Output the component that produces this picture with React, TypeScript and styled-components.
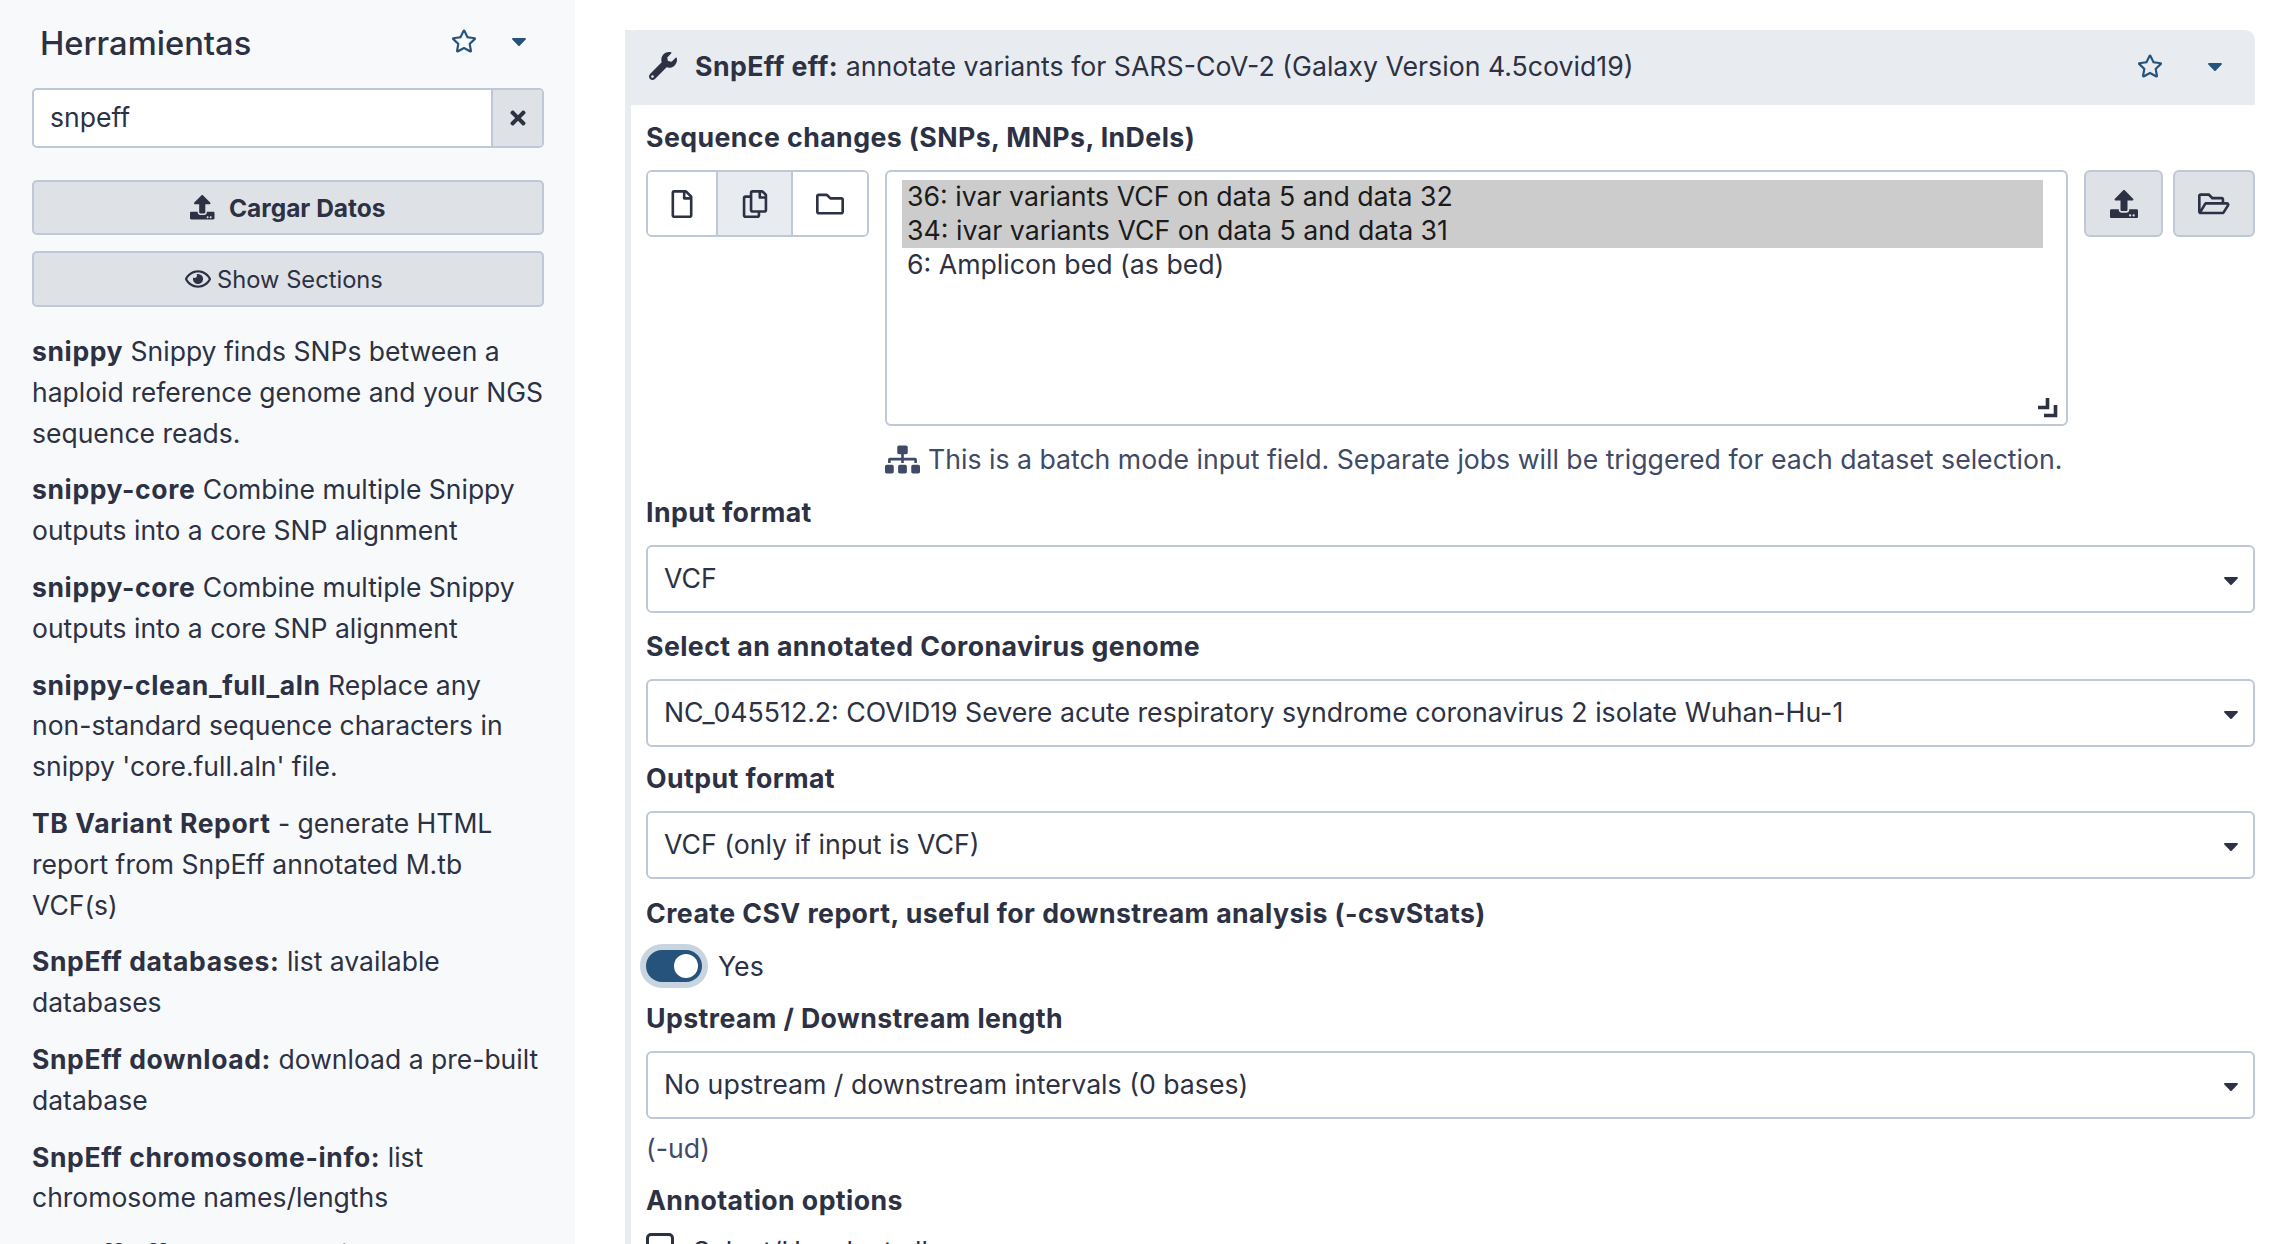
import React from 'react';
import styled, { createGlobalStyle } from 'styled-components';
import {
  FaCaretDown,
  FaRegCopy,
  FaRegEye,
  FaRegFile,
  FaRegFolder,
  FaRegFolderOpen,
  FaRegStar,
  FaSitemap,
  FaTimes,
  FaUpload,
  FaWrench,
} from 'react-icons/fa';

const GlobalStyle = createGlobalStyle`
  html, body {
    margin: 0;
    height: 100%;
    overflow: hidden;
    background: #fff;
  }

  body {
    font-family: Inter, "Noto Sans", sans-serif;
    font-size: 26.7px;
    color: #2c3143;
    -webkit-font-smoothing: antialiased;
  }

  b {
    letter-spacing: 0.42px;
  }
`;

const Page = styled.div`
  display: flex;
  height: 1244px;
  overflow: hidden;
`;

const Sidebar = styled.aside`
  width: 575px;
  flex: none;
  box-sizing: border-box;
  padding: 0 31px 0 32px;
  background: #f8f9fb;
  overflow: hidden;
`;

const SideHeader = styled.div`
  display: flex;
  align-items: center;
  height: 88px;
  padding: 0 8px;
`;

const SideTitle = styled.h2`
  flex: 1;
  margin: 0;
  padding-bottom: 2px;
  font-size: 32.7px;
  font-weight: 500;
  line-height: 86px;
`;

const IconAction = styled.span`
  display: inline-flex;
  align-items: center;
  justify-content: center;
  color: #25537b;
`;

const StarAction = styled(IconAction)`
  font-size: 26px;
`;

const CaretAction = styled(IconAction)`
  font-size: 24px;
`;

const SideActions = styled.div`
  display: flex;
  align-items: center;
  gap: 30px;
  margin-top: -6px;
  padding-right: 5px;
`;

const SearchGroup = styled.div`
  display: flex;
  height: 60px;
  box-sizing: border-box;
  border: 2px solid #bfc8d6;
  border-radius: 5px;
  background: #fff;
  overflow: hidden;
`;

const SearchValue = styled.div`
  flex: 1;
  padding: 0 16px;
  line-height: 55px;
  font-size: 26.6px;
`;

const SearchClear = styled.div`
  width: 49px;
  display: flex;
  align-items: center;
  justify-content: center;
  border-left: 2px solid #bfc8d6;
  background: #dee2e7;
  font-size: 22px;
`;

const SideButton = styled.div<{ $bold?: boolean; $height: number; $top: number }>`
  display: flex;
  align-items: center;
  justify-content: center;
  gap: ${(p) => (p.$bold ? '14px' : '6px')};
  height: ${(p) => p.$height}px;
  margin-top: ${(p) => p.$top}px;
  box-sizing: border-box;
  padding-right: ${(p) => (p.$bold ? '0' : '8px')};
  border: 2px solid #bfc8d6;
  border-radius: 5px;
  background: #dee2e7;
  font-size: ${(p) => (p.$bold ? '24.5px' : '23.7px')};
  font-weight: ${(p) => (p.$bold ? 700 : 400)};

  svg {
    font-size: ${(p) => (p.$bold ? '24.5px' : '26px')};
  }
`;

const ToolList = styled.div`
  margin-top: 24px;
`;

const ToolEntry = styled.p`
  margin: 0 0 16px;
  line-height: 40.8px;
  font-size: 26.5px;

  b {
    letter-spacing: 0.62px;
  }
`;

const NoWrap = styled.span`
  white-space: nowrap;
`;

const Main = styled.main`
  flex: 1;
  min-width: 0;
  padding: 30px 35px 0 50px;
`;

const Panel = styled.section`
  border-left: 6px solid #e8ecf0;
`;

const PanelHeader = styled.header`
  display: flex;
  align-items: center;
  height: 75px;
  box-sizing: border-box;
  margin-left: -6px;
  padding: 0 28px 3px 24px;
  background: #e8ecf0;
  border-radius: 10px 10px 0 0;
`;

const PanelTitle = styled.div`
  flex: 1;
  display: flex;
  align-items: center;
  gap: 18px;

  svg {
    font-size: 28px;
  }
`;

const PanelActions = styled.div`
  display: flex;
  align-items: center;
  gap: 40px;
`;

const PanelBody = styled.div`
  padding: 12px 0 0 15px;
`;

const FieldLabel = styled.div`
  font-weight: 700;
  letter-spacing: 0.42px;
  line-height: 40px;
`;

const DataRow = styled.div`
  display: flex;
  align-items: flex-start;
  margin-top: 13px;
`;

const SourceGroup = styled.div`
  display: flex;
  width: 223px;
  height: 67px;
  flex: none;
  box-sizing: border-box;
  border: 2px solid #bfc8d6;
  border-radius: 6px;
  overflow: hidden;
`;

const SourceOption = styled.div<{ $active?: boolean; $width: number }>`
  width: ${(p) => p.$width}px;
  display: flex;
  align-items: center;
  justify-content: center;
  background: ${(p) => (p.$active ? '#e8ecf0' : '#fff')};
  font-size: 28px;

  & + & {
    border-left: 2px solid #bfc8d6;
  }
`;

const DataList = styled.div`
  position: relative;
  width: 1183px;
  height: 256px;
  margin-left: 16px;
  flex: none;
  box-sizing: border-box;
  padding: 8px 23px 7px 15px;
  border: 2px solid #bfc8d6;
  border-radius: 6px;
`;

const DataItem = styled.div<{ $selected?: boolean }>`
  padding-left: 5px;
  height: 34px;
  line-height: 33px;
  background: ${(p) => (p.$selected ? '#cccccc' : 'transparent')};
  color: ${(p) => (p.$selected ? '#1b1b1b' : 'inherit')};
`;

const ResizeHandle = styled.svg`
  position: absolute;
  right: 8px;
  bottom: 6px;
  width: 21px;
  height: 21px;
`;

const DataButton = styled.div<{ $width: number; $gap: number; $icon: number }>`
  width: ${(p) => p.$width}px;
  height: 67px;
  margin-left: ${(p) => p.$gap}px;
  flex: none;
  display: flex;
  align-items: center;
  justify-content: center;
  box-sizing: border-box;
  border: 2px solid #bfc8d6;
  border-radius: 6px;
  background: #dee2e7;
  font-size: ${(p) => p.$icon}px;
`;

const BatchNote = styled.div`
  display: flex;
  align-items: center;
  gap: 8px;
  margin: 14px 0 0 239px;
  line-height: 38px;
  font-size: 26.65px;
  color: #3f4a66;

  svg {
    font-size: 35px;
  }
`;

const Field = styled.div<{ $top: number }>`
  margin-top: ${(p) => p.$top}px;
`;

const SelectBox = styled.div`
  position: relative;
  height: 68px;
  margin-top: 13px;
  box-sizing: border-box;
  padding: 0 16px;
  border: 2px solid #bfc8d6;
  border-radius: 6px;
  line-height: 62px;
  background: #fff;
`;

const SelectCaret = styled.span`
  position: absolute;
  right: 10px;
  top: 21px;
  display: flex;
  font-size: 24px;
  color: #2c3143;
`;

const ToggleRow = styled.div`
  display: flex;
  align-items: center;
  gap: 16px;
  margin-top: 11px;
  height: 44px;
`;

const ToggleTrack = styled.div`
  position: relative;
  width: 56px;
  height: 32px;
  border-radius: 16px;
  background: #25537b;
  box-shadow: 0 0 0 6px #c8d4df;

  &::after {
    content: "";
    position: absolute;
    right: 4px;
    top: 4px;
    width: 24px;
    height: 24px;
    border-radius: 50%;
    background: #fff;
  }
`;

const HelpText = styled.div`
  margin-top: 9px;
  line-height: 40px;
  color: #3f4a66;
`;

const CheckRow = styled.div`
  display: flex;
  align-items: flex-start;
  gap: 19px;
  margin-top: 13px;
  line-height: 30px;
`;

const CheckBox = styled.div`
  width: 28px;
  height: 28px;
  box-sizing: border-box;
  border: 3px solid #2c3143;
  border-radius: 5px;
`;

const CheckLabel = styled.span`
  margin-top: 3px;
`;

const tools: [string, React.ReactNode][] = [
  ['snippy', ' Snippy finds SNPs between a haploid reference genome and your NGS sequence reads.'],
  ['snippy-core', ' Combine multiple Snippy outputs into a core SNP alignment'],
  ['snippy-core', ' Combine multiple Snippy outputs into a core SNP alignment'],
  ['snippy-clean_full_aln', <> Replace any <NoWrap>non-standard</NoWrap> sequence characters in snippy 'core.full.aln' file.</>],
  ['TB Variant Report', ' - generate HTML report from SnpEff annotated M.tb VCF(s)'],
  ['SnpEff databases:', ' list available databases'],
  ['SnpEff download:', ' download a pre-built database'],
  ['SnpEff chromosome-info:', ' list chromosome names/lengths'],
  ['SnpEff eff:', ' annotate variants'],
];

export default function App() {
  return (
    <Page>
      <GlobalStyle />
      <Sidebar>
        <SideHeader>
          <SideTitle>Herramientas</SideTitle>
          <SideActions>
            <StarAction><FaRegStar /></StarAction>
            <CaretAction><FaCaretDown /></CaretAction>
          </SideActions>
        </SideHeader>
        <SearchGroup>
          <SearchValue>snpeff</SearchValue>
          <SearchClear><FaTimes /></SearchClear>
        </SearchGroup>
        <SideButton $bold $height={55} $top={32}><FaUpload />Cargar Datos</SideButton>
        <SideButton $height={56} $top={16}><FaRegEye />Show Sections</SideButton>
        <ToolList>
          {tools.map(([name, text], i) => (
            <ToolEntry key={i}><b>{name}</b>{text}</ToolEntry>
          ))}
        </ToolList>
      </Sidebar>
      <Main>
        <Panel>
          <PanelHeader>
            <PanelTitle>
              <FaWrench />
              <span><b>SnpEff eff:</b> annotate variants for SARS-CoV-2 (Galaxy Version 4.5covid19)</span>
            </PanelTitle>
            <PanelActions>
              <StarAction><FaRegStar /></StarAction>
              <CaretAction><FaCaretDown /></CaretAction>
            </PanelActions>
          </PanelHeader>
          <PanelBody>
            <FieldLabel>Sequence changes (SNPs, MNPs, InDels)</FieldLabel>
            <DataRow>
              <SourceGroup>
                <SourceOption $width={69}><FaRegFile /></SourceOption>
                <SourceOption $active $width={75}><FaRegCopy /></SourceOption>
                <SourceOption $width={75}><FaRegFolder /></SourceOption>
              </SourceGroup>
              <DataList>
                <DataItem $selected>36: ivar variants VCF on data 5 and data 32</DataItem>
                <DataItem $selected>34: ivar variants VCF on data 5 and data 31</DataItem>
                <DataItem>6: Amplicon bed (as bed)</DataItem>
                <ResizeHandle viewBox="0 0 21 21" fill="none" stroke="#2c3143" strokeWidth="3.6">
                  <path d="M1 10.5h9.5V1" />
                  <path d="M7 18.5h11.5V8" />
                </ResizeHandle>
              </DataList>
              <DataButton $width={79} $gap={16} $icon={28}><FaUpload /></DataButton>
              <DataButton $width={82} $gap={10} $icon={31.5}><FaRegFolderOpen /></DataButton>
            </DataRow>
            <BatchNote>
              <FaSitemap />
              This is a batch mode input field. Separate jobs will be triggered for each dataset selection.
            </BatchNote>
            <Field $top={14}>
              <FieldLabel>Input format</FieldLabel>
              <SelectBox>VCF<SelectCaret><FaCaretDown /></SelectCaret></SelectBox>
            </Field>
            <Field $top={13}>
              <FieldLabel>Select an annotated Coronavirus genome</FieldLabel>
              <SelectBox>
                NC_045512.2: COVID19 Severe acute respiratory syndrome coronavirus 2 isolate Wuhan-Hu-1
                <SelectCaret><FaCaretDown /></SelectCaret>
              </SelectBox>
            </Field>
            <Field $top={11}>
              <FieldLabel>Output format</FieldLabel>
              <SelectBox>VCF (only if input is VCF)<SelectCaret><FaCaretDown /></SelectCaret></SelectBox>
            </Field>
            <Field $top={14}>
              <FieldLabel>Create CSV report, useful for downstream analysis (-csvStats)</FieldLabel>
              <ToggleRow><ToggleTrack />Yes</ToggleRow>
            </Field>
            <Field $top={10}>
              <FieldLabel>Upstream / Downstream length</FieldLabel>
              <SelectBox>No upstream / downstream intervals (0 bases)<SelectCaret><FaCaretDown /></SelectCaret></SelectBox>
            </Field>
            <HelpText>(-ud)</HelpText>
            <Field $top={12}>
              <FieldLabel>Annotation options</FieldLabel>
              <CheckRow><CheckBox /><CheckLabel>Select/Unselect all</CheckLabel></CheckRow>
            </Field>
          </PanelBody>
        </Panel>
      </Main>
    </Page>
  );
}
